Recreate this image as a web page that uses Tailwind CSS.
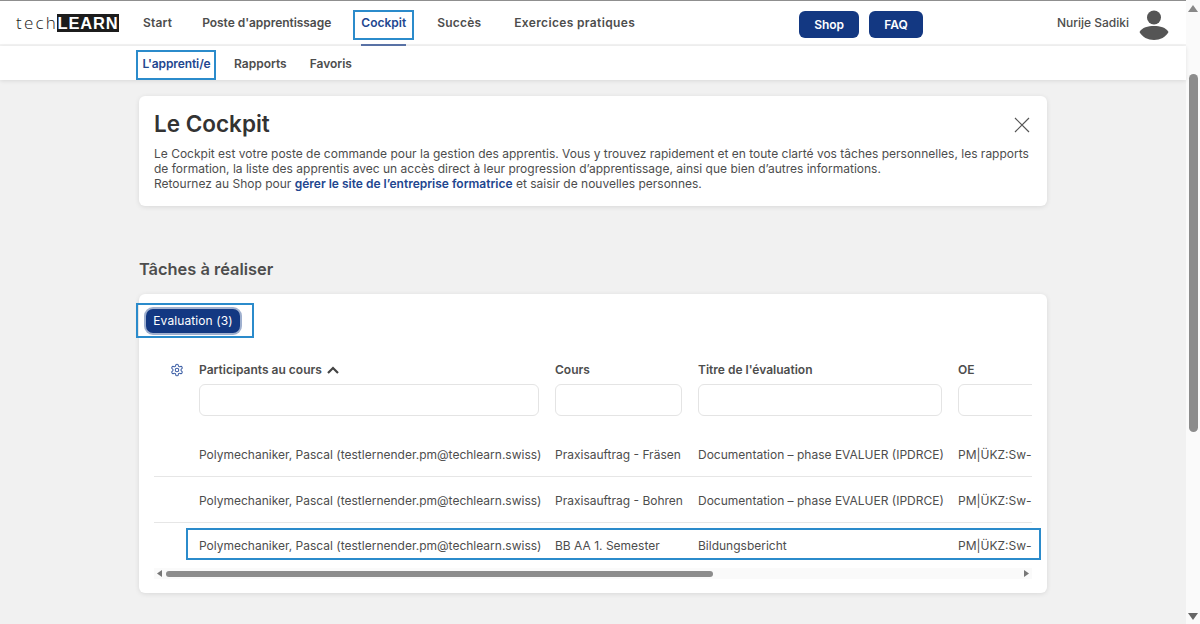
<!DOCTYPE html>
<html lang="en">
<head>
    <meta charset="UTF-8">
    <title>Cockpit</title>
    <script src="https://cdn.jsdelivr.net/npm/@tailwindcss/browser@4"></script>
</head>
<body class="h-[624px] overflow-hidden bg-[#f1f1f1] font-['Inter',sans-serif] text-[#4d4d4d] flex">
    <div class="w-[1186px] h-[624px] flex flex-col">
        <!-- main nav -->
        <header class="h-[46px] bg-white border-t border-t-[#8f8f8f] border-b-2 border-b-[#f3f3f3] flex items-center relative">
            <div class="ml-[16px] w-[104px] flex items-center text-[#1a1a1a] mt-[1px]">
                <span class="w-[41px] text-[17px] font-light tracking-[2.200px] font-['Open_Sans',sans-serif]">tech</span>
                <span class="w-[62px] h-[18px] bg-[#1c1c1c] text-white text-[16.500px] font-bold tracking-[0.800px] leading-[18px] text-center font-['Liberation_Sans',sans-serif]">LEARN</span>
            </div>
            <nav class="flex items-center text-[12px] font-semibold h-full">
                <a class="ml-[23px] mt-[1px] tracking-[0.200px]">Start</a>
                <a class="ml-[30px] mt-[1px] tracking-[-0.050px]">Poste d'apprentissage</a>
                <a class="ml-[22px] mt-[5px] w-[61px] h-[30px] pb-[4px] flex items-center justify-center border-2 border-[#2b8bcb] text-[#22468f]">Cockpit</a>
                <a class="ml-[23px] mt-[1px] tracking-[0.200px]">Succès</a>
                <a class="ml-[33px] mt-[1px] tracking-[0.350px]">Exercices pratiques</a>
            </nav>
            <div class="absolute left-[361px] bottom-[-2px] w-[45px] h-[2px] bg-[#5b74a8]"></div>
            <div class="ml-[164px] mt-[4px] flex gap-[10px] text-white text-[12px] font-semibold">
                <a class="w-[60px] h-[27px] rounded-[6px] bg-[#133882] flex items-center justify-center">Shop</a>
                <a class="w-[54px] h-[27px] rounded-[6px] bg-[#133882] flex items-center justify-center">FAQ</a>
            </div>
            <span class="ml-auto text-[12px] font-medium mt-[1px]">Nurije Sadiki</span>
            <svg class="ml-[10px] mr-[17px] mt-[5px]" width="30" height="30" viewBox="0 0 30 30" fill="#555">
                <circle cx="15" cy="7.500" r="7"/>
                <path d="M0.500 22 C3 17.500 9 16 15 16 C21 16 27 17.500 29.500 22 C27 27 21 30 15 30 C9 30 3 27 0.500 22 Z"/>
            </svg>
        </header>

        <!-- sub nav -->
        <div class="h-[34px] bg-white shadow-[0_1px_4px_rgba(0,0,0,0.1)] flex items-center pl-[136px] text-[12px] font-semibold relative">
            <a class="mt-[3px] w-[80px] h-[30px] pb-[2px] pl-[1px] flex items-center justify-center border-2 border-[#2b8bcb] text-[#22468f] tracking-[-0.100px]">L'apprenti/e</a>
            <a class="ml-[18px] mt-[1px]">Rapports</a>
            <a class="ml-[23px] mt-[1px]">Favoris</a>
        </div>

        <main class="pl-[139px] pt-[16px]">
            <!-- intro card -->
            <section class="w-[908px] h-[110px] bg-white rounded-[6px] shadow-[0_1px_5px_rgba(0,0,0,0.1)] pt-[13px] pl-[15px] relative">
                <h1 class="text-[22.500px] leading-[30px] font-semibold text-[#333]">Le Cockpit</h1>
                <p class="mt-[7px] w-[880px] text-[12px] leading-[15px]">
                    Le Cockpit est votre poste de commande pour la gestion des apprentis. Vous y trouvez rapidement et en toute clarté vos tâches personnelles, les rapports de formation, la liste des apprentis avec un accès direct à leur progression d’apprentissage, ainsi que bien d’autres informations.<br>
                    Retournez au Shop pour <a class="font-semibold text-[#22468f]">gérer le site de l’entreprise formatrice</a> et saisir de nouvelles personnes.
                </p>
                <svg class="absolute right-[17px] top-[21px]" width="16" height="16" viewBox="0 0 16 16" stroke="#555" stroke-width="1.200" fill="none">
                    <path d="M1 1 L15 15 M15 1 L1 15"/>
                </svg>
            </section>

            <h2 class="mt-[53px] text-[16.400px] leading-[20px] font-semibold">Tâches à réaliser</h2>

            <!-- tasks card -->
            <section class="mt-[15px] w-[908px] h-[299px] bg-white rounded-[6px] shadow-[0_1px_5px_rgba(0,0,0,0.1)] relative">
                <div class="absolute left-[-3px] top-[9px] w-[118px] h-[35px] border-2 border-[#2b8bcb] flex items-center pl-[8px]">
                    <a class="w-[94px] h-[24px] rounded-[7px] bg-[#133882] ring-2 ring-[#9fb0cf] text-white text-[12px] tracking-[0.100px] flex items-center justify-center">Evaluation (3)</a>
                </div>

                <div class="absolute left-[15px] top-[65px] w-[878px] overflow-hidden text-[12px]">
                    <div class="grid grid-cols-[29px_340px_127px_244px_120px] gap-x-[16px] font-semibold h-[20px] pt-[1px] items-center">
                        <div class="pl-[16px]">
                            <svg width="14" height="14" viewBox="0 0 24 24" fill="none" stroke="#3d5fa6" stroke-width="1.800" stroke-linecap="round" stroke-linejoin="round">
                                <path d="M12.220 2h-.44a2 2 0 0 0-2 2v.18a2 2 0 0 1-1 1.730l-.43.250a2 2 0 0 1-2 0l-.15-.08a2 2 0 0 0-2.730.730l-.22.380a2 2 0 0 0 .730 2.730l.15.100a2 2 0 0 1 1 1.720v.510a2 2 0 0 1-1 1.740l-.15.090a2 2 0 0 0-.730 2.730l.22.380a2 2 0 0 0 2.730.730l.15-.08a2 2 0 0 1 2 0l.43.250a2 2 0 0 1 1 1.730V20a2 2 0 0 0 2 2h.44a2 2 0 0 0 2-2v-.18a2 2 0 0 1 1-1.730l.43-.250a2 2 0 0 1 2 0l.15.080a2 2 0 0 0 2.730-.730l.22-.390a2 2 0 0 0-.730-2.730l-.15-.080a2 2 0 0 1-1-1.740v-.500a2 2 0 0 1 1-1.740l.15-.090a2 2 0 0 0 .730-2.730l-.22-.380a2 2 0 0 0-2.730-.730l-.15.080a2 2 0 0 1-2 0l-.43-.250a2 2 0 0 1-1-1.730V4a2 2 0 0 0-2-2z"/>
                                <circle cx="12" cy="12" r="3"/>
                            </svg>
                        </div>
                        <div class="flex items-center gap-[5px]">Participants au cours
                            <svg width="12" height="8" viewBox="0 0 12 8" fill="none" stroke="#444" stroke-width="2.200"><path d="M1 7 L6 2 L11 7"/></svg>
                        </div>
                        <div>Cours</div>
                        <div>Titre de l'évaluation</div>
                        <div>OE</div>
                    </div>

                    <div class="grid grid-cols-[29px_340px_127px_244px_120px] gap-x-[16px] mt-[5px] h-[32px]">
                        <div></div>
                        <div class="border border-[#e4e4e4] rounded-[6px]"></div>
                        <div class="border border-[#e4e4e4] rounded-[6px]"></div>
                        <div class="border border-[#e4e4e4] rounded-[6px]"></div>
                        <div class="border border-[#e4e4e4] rounded-[6px]"></div>
                    </div>

                    <div class="mt-[15px] whitespace-nowrap">
                        <div class="grid grid-cols-[29px_340px_127px_244px_120px] gap-x-[16px] items-center h-[46px] pt-[2px] border-b border-[#e6e6e6]">
                            <div></div>
                            <div>Polymechaniker, Pascal (testlernender.pm@techlearn.swiss)</div>
                            <div>Praxisauftrag - Fräsen</div>
                            <div>Documentation – phase EVALUER (IPDRCE)</div>
                            <div>PM|ÜKZ:Sw-3</div>
                        </div>
                        <div class="grid grid-cols-[29px_340px_127px_244px_120px] gap-x-[16px] items-center h-[46px] pt-[2px] border-b border-[#e6e6e6]">
                            <div></div>
                            <div>Polymechaniker, Pascal (testlernender.pm@techlearn.swiss)</div>
                            <div>Praxisauftrag - Bohren</div>
                            <div>Documentation – phase EVALUER (IPDRCE)</div>
                            <div>PM|ÜKZ:Sw-3</div>
                        </div>
                        <div class="grid grid-cols-[29px_340px_127px_244px_120px] gap-x-[16px] items-center h-[46px]">
                            <div></div>
                            <div>Polymechaniker, Pascal (testlernender.pm@techlearn.swiss)</div>
                            <div>BB AA 1. Semester</div>
                            <div>Bildungsbericht</div>
                            <div>PM|ÜKZ:Sw-3</div>
                        </div>
                    </div>
                </div>

                <!-- focused row outline -->
                <div class="absolute left-[47px] top-[234px] w-[855px] h-[32px] border-2 border-[#2b8bcb]"></div>

                <!-- horizontal scrollbar -->
                <div class="absolute left-[15px] top-[274px] w-[878px] h-[11px] bg-[#fafafa] flex items-center">
                    <svg class="ml-[3px]" width="5" height="7" viewBox="0 0 5 7" fill="#777"><path d="M5 0 V7 L0 3.500 Z"/></svg>
                    <div class="ml-[4px] w-[547px] h-[6px] rounded-full bg-[#8c8c8c]"></div>
                    <svg class="ml-auto mr-[3px]" width="5" height="7" viewBox="0 0 5 7" fill="#777"><path d="M0 0 V7 L5 3.500 Z"/></svg>
                </div>
            </section>
        </main>
    </div>

    <!-- page scrollbar -->
    <div class="w-[14px] h-[624px] bg-[#fafafa] flex flex-col items-center">
        <svg class="mt-[5px]" width="10" height="7" viewBox="0 0 10 7" fill="#888"><path d="M0 7 H10 L5 0 Z"/></svg>
        <div class="mt-[62px] w-[9px] h-[358px] rounded-full bg-[#8c8c8c]"></div>
        <svg class="mt-auto mb-[4px]" width="10" height="7" viewBox="0 0 10 7" fill="#666"><path d="M0 0 H10 L5 7 Z"/></svg>
    </div>
</body>
</html>
